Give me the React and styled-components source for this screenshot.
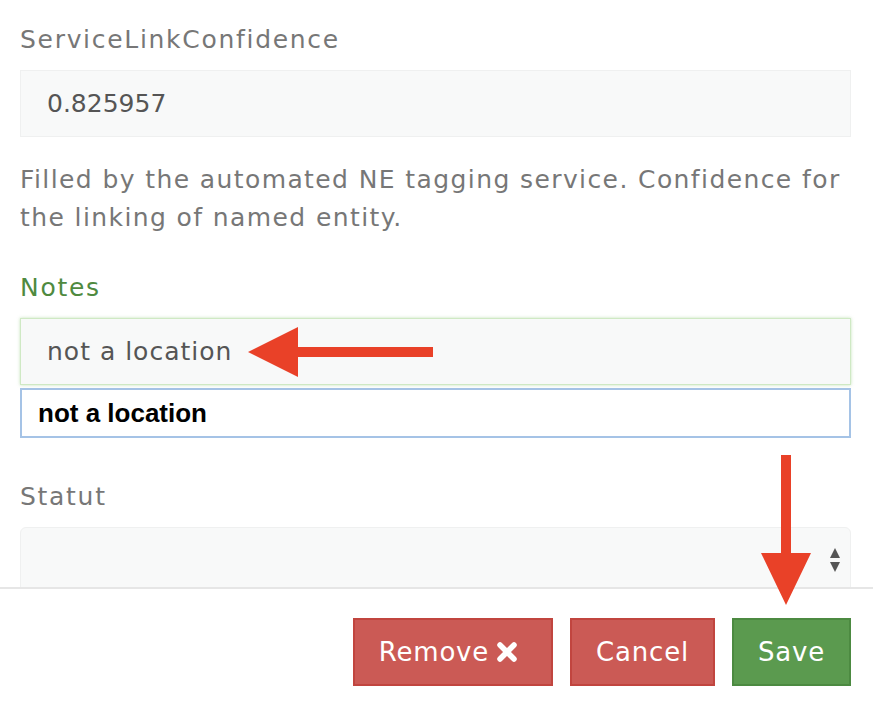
import React from 'react';
import styled, { createGlobalStyle } from 'styled-components';

const GlobalStyle = createGlobalStyle`
html, body {
  margin: 0;
  padding: 0;
  background: #fff;
}
body {
  font-family: "DejaVu Sans", "Open Sans", sans-serif;
}
* {
  box-sizing: border-box;
}
`;

// annotation arrows drawn over the form
const LeftArrow = () => (
    <svg width="190" height="54" viewBox="0 0 190 54">
        <polygon points="0,25 50,0 50,20 185,20 185,30 50,30 50,50" fill="#e94128" />
    </svg>
);

const DownArrow = () => (
    <svg width="52" height="152" viewBox="0 0 52 152">
        <polygon points="21,0 31,0 31,98 51,98 26,150 1,98 21,98" fill="#e94128" />
    </svg>
);

const RemoveIcon = () => (
    <IconWrap>
        <svg width="20" height="20" viewBox="0 0 20 20">
            <path d="M3 3 L17 17 M17 3 L3 17" stroke="#fff" strokeWidth="5.5" strokeLinecap="round" />
        </svg>
    </IconWrap>
);

const SortIcon = () => (
    <svg width="12" height="26" viewBox="0 0 12 26">
        <polygon points="6,1 11,11 1,11" fill="#555" />
        <polygon points="1,15 11,15 6,25" fill="#555" />
    </svg>
);

export default function App() {
    return (
        <>
            <GlobalStyle />
            <Page>
                <FormBody>
                    <FieldLabel>ServiceLinkConfidence</FieldLabel>
                    <TextInput>0.825957</TextInput>
                    <HelpText>
                        Filled by the automated NE tagging service. Confidence for the linking of named entity.
                    </HelpText>

                    <FieldLabel success>Notes</FieldLabel>
                    <TextInput success>not a location</TextInput>
                    <Suggestions>
                        <SuggestionItem>not a location</SuggestionItem>
                    </Suggestions>

                    <FieldLabel spaced>Statut</FieldLabel>
                    <SelectBox>
                        <SortIcon />
                    </SelectBox>
                </FormBody>
                <Footer>
                    <ActionBtn danger>Remove <RemoveIcon /></ActionBtn>
                    <ActionBtn danger>Cancel</ActionBtn>
                    <ActionBtn>Save</ActionBtn>
                </Footer>

                <ArrowLeftPos><LeftArrow /></ArrowLeftPos>
                <ArrowDownPos><DownArrow /></ArrowDownPos>
            </Page>
        </>
    );
}

const Page = styled.div`
position: relative;
width: 873px;
height: 709px;
overflow: hidden;
display: flex;
flex-direction: column;
`;

const FormBody = styled.div`
flex-shrink: 0;
height: 587px;
overflow: hidden;
padding: 21px 22px 0 20px;
`;

const FieldLabel = styled.div`
font-size: 25px;
line-height: 38px;
letter-spacing: 1.7px;
color: ${props => props.success ? '#4f8a3f' : '#777'};
margin-top: ${props => props.spaced ? '40px' : '0'};
margin-bottom: 11px;
`;

const TextInput = styled.div`
height: 67px;
display: flex;
align-items: center;
padding-left: 26px;
font-size: 25px;
letter-spacing: ${props => props.success ? '1px' : '0'};
color: #555;
background: #f8f9f9;
border: 1px solid ${props => props.success ? '#cfe9c4' : '#eff0f0'};
box-shadow: ${props => props.success ? '0 0 3px rgba(140, 200, 120, 0.5)' : 'none'};
`;

const HelpText = styled.div`
margin-top: 24px;
margin-bottom: 32px;
font-size: 25px;
line-height: 38px;
letter-spacing: 1.4px;
color: #777;
`;

const Suggestions = styled.div`
margin-top: 3px;
height: 50px;
border: 2px solid #a5c3e6;
background: #fff;
display: flex;
align-items: center;
`;

const SuggestionItem = styled.div`
padding-left: 16px;
font-family: "Liberation Sans", Arial, sans-serif;
font-weight: bold;
font-size: 26px;
color: #000;
`;

const SelectBox = styled.div`
height: 80px;
background: #f8f9f9;
border: 1px solid #eff0f0;
border-radius: 6px;
display: flex;
justify-content: flex-end;
padding: 19px 9px 0 0;
`;

const Footer = styled.div`
flex: 1;
border-top: 2px solid #e6e6e6;
display: flex;
justify-content: flex-end;
align-items: flex-start;
gap: 17px;
padding: 29px 22px 0 0;
`;

const ActionBtn = styled.button`
height: 68px;
padding: 0 24px;
display: flex;
align-items: center;
gap: 8px;
font-family: "DejaVu Sans", "Open Sans", sans-serif;
font-size: 26px;
letter-spacing: 0.8px;
color: #fff;
background: ${props => props.danger ? '#cb5a55' : '#5b9a4f'};
border: 2px solid ${props => props.danger ? '#c1453f' : '#4c8a41'};
border-radius: 0;
`;

const IconWrap = styled.span`
display: inline-flex;
margin-right: 10px;
`;

const ArrowLeftPos = styled.div`
position: absolute;
left: 248px;
top: 327px;
line-height: 0;
`;

const ArrowDownPos = styled.div`
position: absolute;
left: 760px;
top: 455px;
line-height: 0;
`;
